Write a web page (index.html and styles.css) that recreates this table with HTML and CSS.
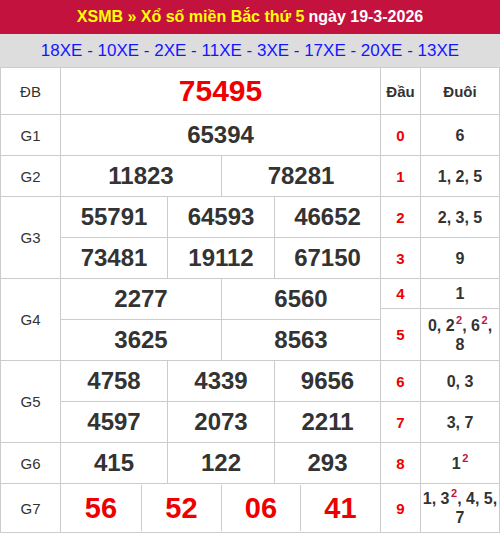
FILE: index.html
```html
<!DOCTYPE html>
<html lang="vi">
<head>
<meta charset="utf-8">
<title>XSMB</title>
<link rel="stylesheet" href="styles.css">
</head>
<body>
<div class="page">
  <div class="title"><span class="hl">XSMB » Xổ số miền Bắc thứ 5</span> ngày 19-3-2026</div>
  <div class="codes">18XE - 10XE - 2XE - 11XE - 3XE - 17XE - 20XE - 13XE</div>
  <div class="board">
    <div class="prizes">
      <div class="lbl">ĐB</div>
      <div class="sub"><div class="num db">75495</div></div>

      <div class="lbl">G1</div>
      <div class="sub"><div class="num">65394</div></div>

      <div class="lbl">G2</div>
      <div class="sub two"><div class="num">11823</div><div class="num">78281</div></div>

      <div class="lbl span2">G3</div>
      <div class="sub three"><div class="num">55791</div><div class="num">64593</div><div class="num">46652</div></div>
      <div class="sub three"><div class="num">73481</div><div class="num">19112</div><div class="num">67150</div></div>

      <div class="lbl span2">G4</div>
      <div class="sub two"><div class="num">2277</div><div class="num">6560</div></div>
      <div class="sub two"><div class="num">3625</div><div class="num">8563</div></div>

      <div class="lbl span2">G5</div>
      <div class="sub three"><div class="num">4758</div><div class="num">4339</div><div class="num">9656</div></div>
      <div class="sub three"><div class="num">4597</div><div class="num">2073</div><div class="num">2211</div></div>

      <div class="lbl">G6</div>
      <div class="sub three"><div class="num">415</div><div class="num">122</div><div class="num">293</div></div>

      <div class="lbl">G7</div>
      <div class="g7wrap">
        <div class="sub four"><div class="num red">56</div><div class="num red">52</div><div class="num red">06</div><div class="num red">41</div></div>
      </div>
    </div>
    <div class="loto">
      <div class="hd">Đầu</div><div class="hd">Đuôi</div>
      <div class="dau">0</div><div class="duoi"><span>6</span></div>
      <div class="dau">1</div><div class="duoi"><span>1, 2, 5</span></div>
      <div class="dau">2</div><div class="duoi"><span>2, 3, 5</span></div>
      <div class="dau">3</div><div class="duoi"><span>9</span></div>
      <div class="dau">4</div><div class="duoi"><span>1</span></div>
      <div class="dau">5</div><div class="duoi"><span>0, 2<sup>2</sup>, 6<sup>2</sup>, 8</span></div>
      <div class="dau">6</div><div class="duoi"><span>0, 3</span></div>
      <div class="dau">7</div><div class="duoi"><span>3, 7</span></div>
      <div class="dau">8</div><div class="duoi"><span>1<sup>2</sup></span></div>
      <div class="dau">9</div><div class="duoi"><span>1, 3<sup>2</sup>, 4, 5, 7</span></div>
    </div>
  </div>
</div>
</body>
</html>
```
FILE: styles.css
```css
* { box-sizing: border-box; }
html, body { margin: 0; padding: 0; background: #fff; }
body { font-family: "Liberation Sans", Arial, sans-serif; color: #333; }
.page { width: 500px; }

.title {
  height: 34px;
  background: #c4123f;
  color: #fff;
  font-weight: bold;
  font-size: 16px;
  display: flex;
  align-items: center;
  justify-content: center;
}
.title .hl { color: #ffff00; white-space: pre; margin-right: 4px; }

.codes {
  height: 33px;
  background: #ddd;
  color: #1515ff;
  font-size: 17px;
  display: flex;
  align-items: center;
  justify-content: center;
}

.board { display: flex; }

.prizes {
  display: grid;
  grid-template-columns: 59px 319px;
  grid-template-rows: 46px repeat(9, 40px) 48px;
  gap: 1px;
  padding: 1px;
  background: #ccc;
}
.lbl {
  background: #fff;
  display: flex;
  align-items: center;
  justify-content: center;
  font-size: 15px;
  color: #333;
}
.lbl.span2 { grid-row: span 2; }

.sub {
  display: grid;
  grid-template-columns: 1fr;
  gap: 1px;
  background: #ccc;
}
.sub.two { grid-template-columns: 160px 1fr; }
.sub.three { grid-template-columns: 106px 106px 1fr; }
.sub.four { grid-template-columns: 80px 79px 78px 1fr; height: 100%; }

.num {
  background: #fff;
  display: flex;
  align-items: center;
  justify-content: center;
  font-weight: bold;
  font-size: 24px;
  color: #333;
}
.num.db { color: #ee0000; font-size: 30px; }
.num.red { color: #ee0000; font-size: 29px; }

.g7wrap { background: #fff; padding: 1px 0; }

.loto {
  display: grid;
  grid-template-columns: 39px 78px;
  grid-template-rows: 46px 40px 40px 40px 40px 29px 51px 40px 40px 40px 48px;
  gap: 1px;
  padding: 1px 1px 1px 0;
  background: #ccc;
}
.loto > div {
  background: #fff;
  display: flex;
  align-items: center;
  justify-content: center;
  text-align: center;
  font-weight: bold;
}
.hd { font-size: 15px; color: #333; }
.dau { font-size: 15px; color: #ee0000; }
.duoi { font-size: 16px; color: #333; line-height: 19px; padding: 0 1px; }
.duoi sup {
  color: #c4123f;
  font-size: 11px;
  line-height: 0;
  vertical-align: 7px;
  margin-left: 1.5px;
}
```
